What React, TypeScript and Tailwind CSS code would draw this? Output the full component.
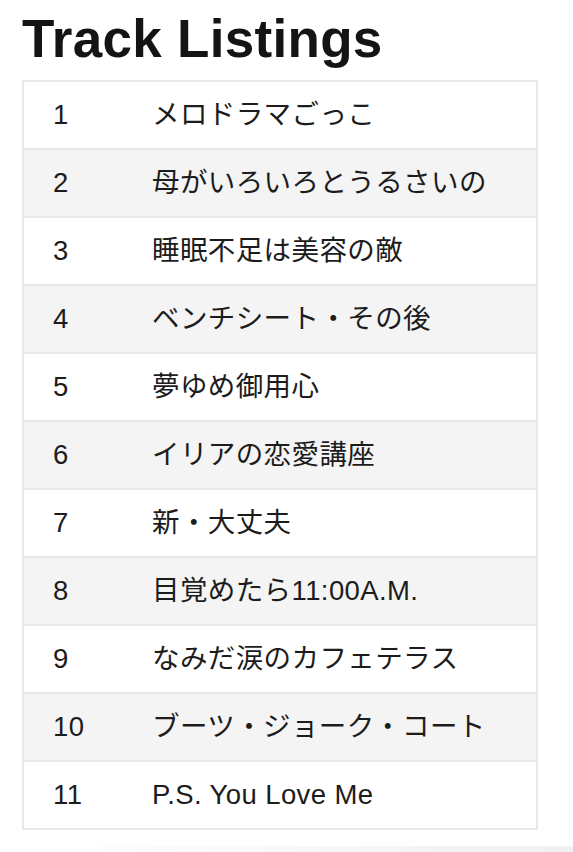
const tracks = [
  "メロドラマごっこ",
  "母がいろいろとうるさいの",
  "睡眠不足は美容の敵",
  "ベンチシート・その後",
  "夢ゆめ御用心",
  "イリアの恋愛講座",
  "新・大丈夫",
  "目覚めたら11:00A.M.",
  "なみだ涙のカフェテラス",
  "ブーツ・ジョーク・コート",
  "P.S. You Love Me",
];

export default function App() {
  return (
    <div className="min-h-[852px] bg-white text-[#1c1c1c] font-['Liberation_Sans','Noto_Sans_CJK_JP',sans-serif]">
      <div className="px-[22px] pt-[8px]">
        <h1 className="text-[53px] font-bold leading-[62px] tracking-[0.3px] text-[#141414]">
          Track Listings
        </h1>
        <div className="mt-[10px] w-[516px] border-2 border-[#e8e8e8]">
          {tracks.map((title, i) => (
            <div
              key={i}
              className={
                "flex items-center pl-[29px] text-[27.5px] tracking-[0.4px] " +
                (i > 0 ? "h-[68px] border-t-2 border-[#e8e8e8] " : "h-[66px] ") +
                (i % 2 === 1 ? "bg-[#f4f4f4]" : "bg-white")
              }
            >
              <span className="w-[99px]">{i + 1}</span>
              <span>{title}</span>
            </div>
          ))}
        </div>
      </div>
      <div className="mt-[16px] ml-[30px] h-[6px] bg-gradient-to-r from-white to-[#f0f0f0]" />
    </div>
  );
}
